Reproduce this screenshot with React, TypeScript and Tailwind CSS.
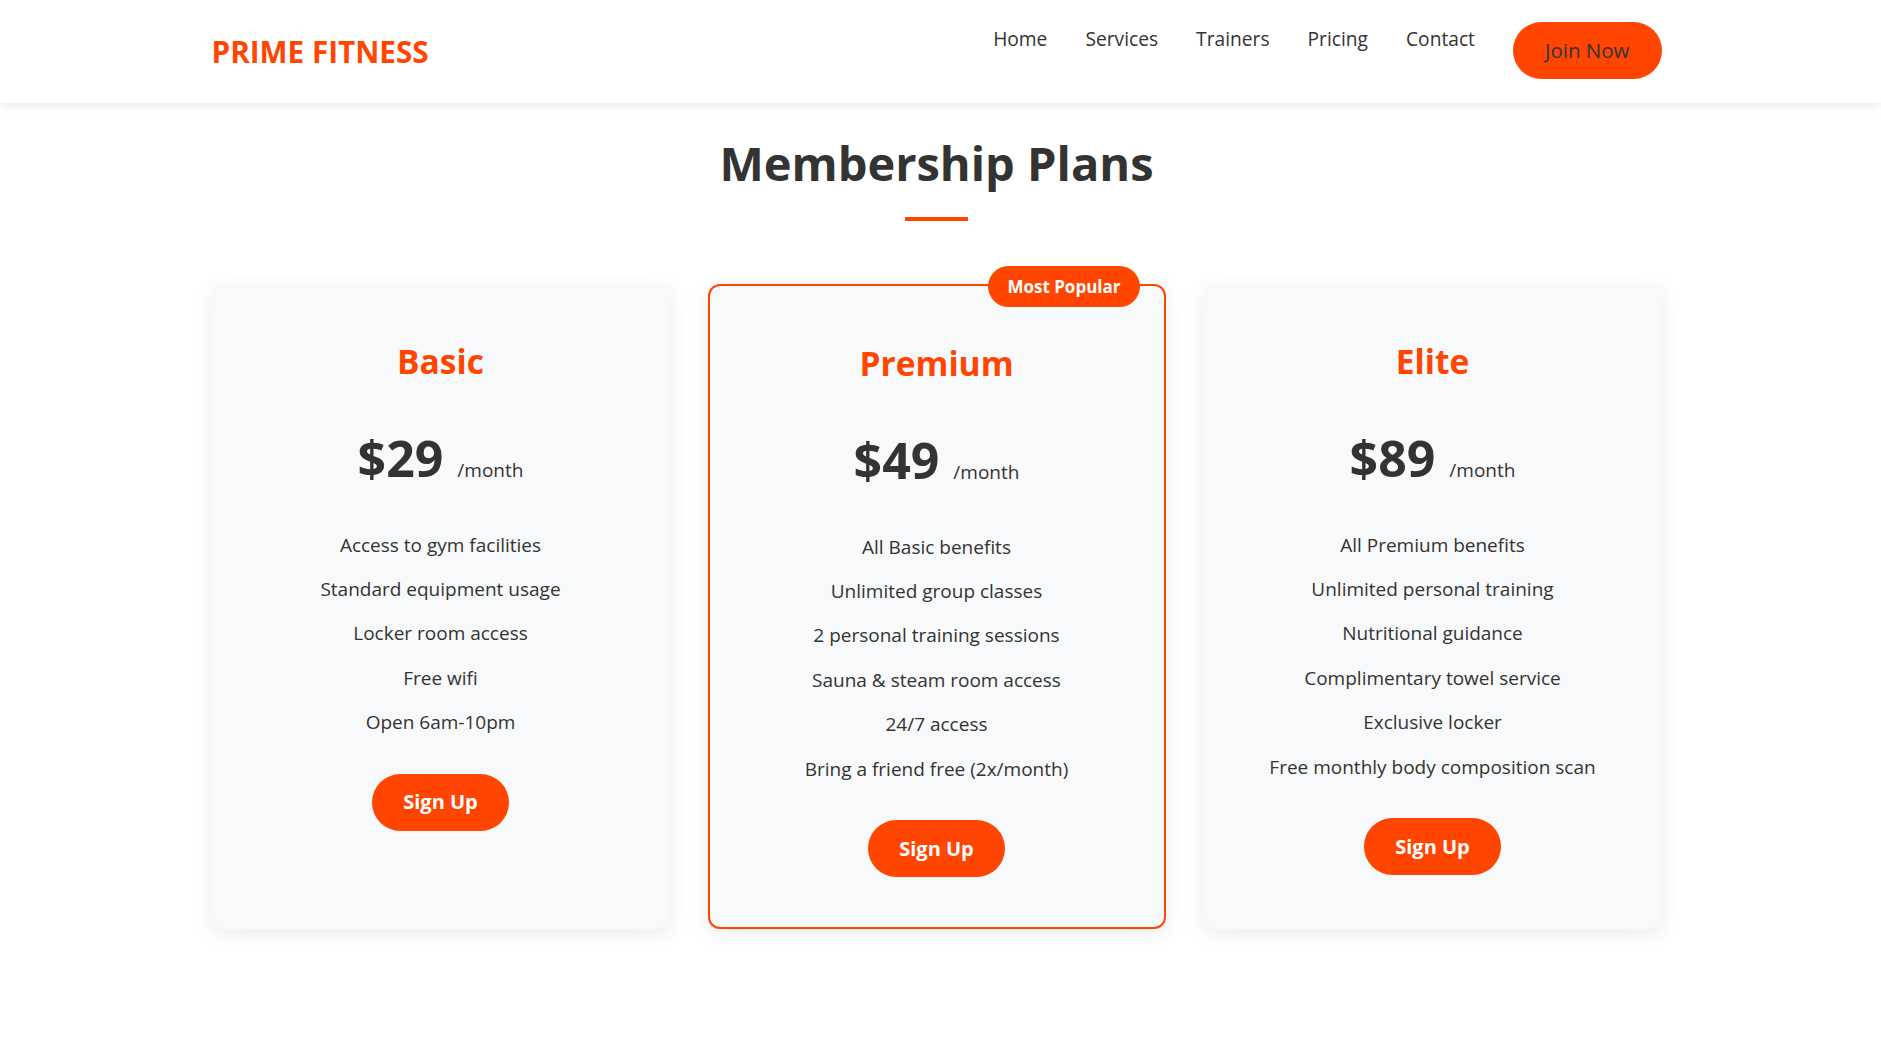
import React from "react";

type Plan = {
  name: string;
  price: string;
  features: string[];
  popular?: boolean;
};

const plans: Plan[] = [
  {
    name: "Basic",
    price: "$29",
    features: [
      "Access to gym facilities",
      "Standard equipment usage",
      "Locker room access",
      "Free wifi",
      "Open 6am-10pm",
    ],
  },
  {
    name: "Premium",
    price: "$49",
    popular: true,
    features: [
      "All Basic benefits",
      "Unlimited group classes",
      "2 personal training sessions",
      "Sauna & steam room access",
      "24/7 access",
      "Bring a friend free (2x/month)",
    ],
  },
  {
    name: "Elite",
    price: "$89",
    features: [
      "All Premium benefits",
      "Unlimited personal training",
      "Nutritional guidance",
      "Complimentary towel service",
      "Exclusive locker",
      "Free monthly body composition scan",
    ],
  },
];

function PlanCard({ plan }: { plan: Plan }) {
  return (
    <div
      className={
        plan.popular
          ? "relative rounded-[12px] border-2 border-[#ff4500] bg-[#f8f9fa] px-[36px] pt-[56px] pb-[50px] text-center shadow-[0_5px_20px_rgba(0,0,0,0.08)]"
          : "relative rounded-[12px] bg-[#f8f9fa] px-[36px] pt-[56px] pb-[50px] text-center shadow-[0_5px_20px_rgba(0,0,0,0.08)]"
      }
    >
      {plan.popular && (
        <div className="absolute -top-[20px] right-[24px] flex h-[41px] items-center rounded-full bg-[#ff4500] px-[19px] text-[17px] font-bold text-white">
          Most Popular
        </div>
      )}
      <h3 className="text-[33.5px] font-bold leading-[42px] text-[#ff4500]">{plan.name}</h3>
      <div className="mt-[46px] flex items-baseline justify-center gap-[14px]">
        <span className="text-[50px] font-bold leading-[60px] text-[#333]">{plan.price}</span>
        <span className="text-[19px] leading-[29px] text-[#333]">/month</span>
      </div>
      <ul className="mt-[35px]">
        {plan.features.map((f) => (
          <li key={f} className="py-[7.7px] text-[19px] leading-[29px] text-[#333]">
            {f}
          </li>
        ))}
      </ul>
      <div className="mt-[29px]">
        <a
          href="#"
          className="inline-flex h-[57px] items-center rounded-full bg-[#ff4500] px-[31px] text-[20px] font-bold text-white"
        >
          Sign Up
        </a>
      </div>
    </div>
  );
}

export default function App() {
  return (
    <div className="min-h-screen bg-white font-['Open_Sans',sans-serif] text-[#333]">
      <header className="relative z-10 bg-white shadow-[0_2px_10px_rgba(0,0,0,0.1)]">
        <div className="pr-[8px]">
          <div className="mx-auto flex h-[103px] w-[1450px] items-center justify-between">
            <div className="text-[29.7px] font-bold leading-[30px] text-[#ff4500]">PRIME FITNESS</div>
            <nav className="mb-[2px] flex items-start gap-[38px]">
              {["Home", "Services", "Trainers", "Pricing", "Contact"].map((l) => (
                <a key={l} href="#" className="mt-[2px] text-[19.2px] leading-[29px] text-[#333]">
                  {l}
                </a>
              ))}
              <a
                href="#"
                className="flex h-[57px] items-center rounded-full bg-[#ff4500] px-[32px] text-[20.5px] leading-[29px] text-[#333]"
              >
                Join Now
              </a>
            </nav>
          </div>
        </div>
      </header>
      <main className="pr-[8px]">
        <div className="mx-auto w-[1450px] pt-[31px] pb-[100px]">
          <h2 className="text-center text-[47px] font-bold leading-[59px] text-[#333]">Membership Plans</h2>
          <div className="mx-auto mt-[24px] h-[4px] w-[63px] bg-[#ff4500]" />
          <div className="mt-[63px] grid grid-cols-3 gap-[38px]">
            {plans.map((p) => (
              <PlanCard key={p.name} plan={p} />
            ))}
          </div>
        </div>
      </main>
    </div>
  );
}
